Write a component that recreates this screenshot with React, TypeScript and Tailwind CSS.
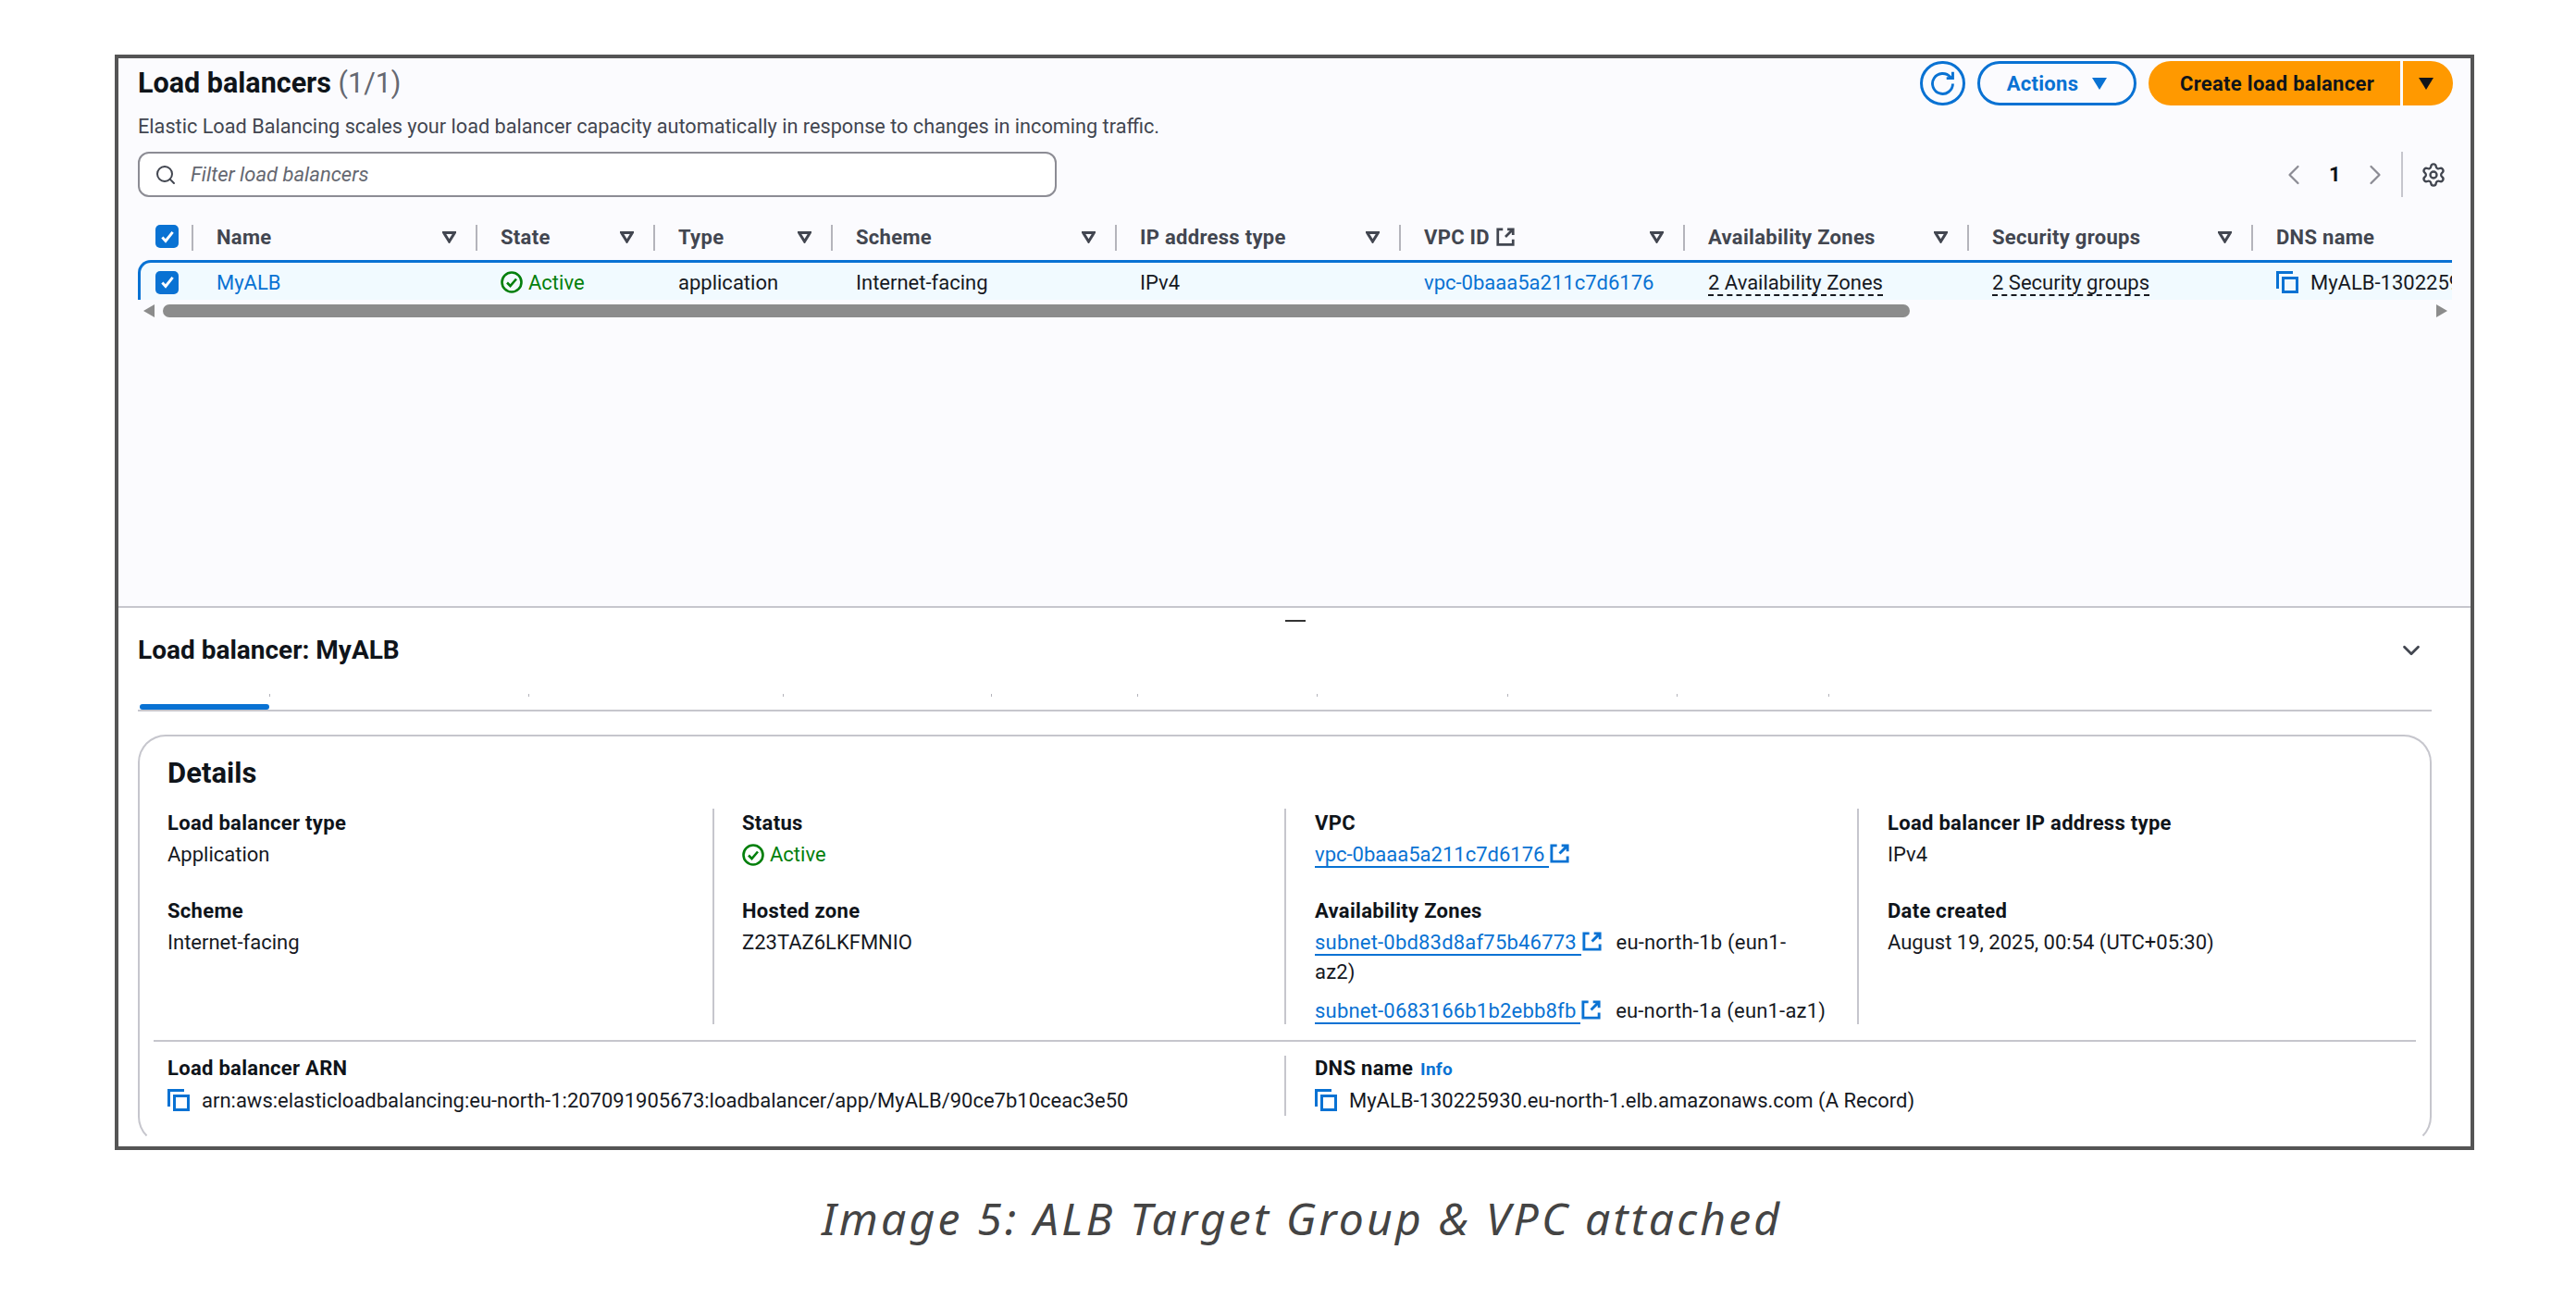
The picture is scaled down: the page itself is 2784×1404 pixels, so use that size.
import React from "react";
import { ChevronDown, ChevronLeft, ChevronRight, Search, Settings } from "lucide-react";

const tabTicks = ["w-[143px]", "w-[280px]", "w-[275px]", "w-[225px]", "w-[158px]", "w-[194px]", "w-[206px]", "w-[183px]", "w-[164px]"];

const columns = [
  { label: "Name", width: "w-[307px]", filter: true },
  { label: "State", width: "w-[192px]", filter: true },
  { label: "Type", width: "w-[192px]", filter: true },
  { label: "Scheme", width: "w-[307px]", filter: true },
  { label: "IP address type", width: "w-[307px]", filter: true },
  { label: "VPC ID", width: "w-[307px]", filter: true, external: true },
  { label: "Availability Zones", width: "w-[307px]", filter: true },
  { label: "Security groups", width: "w-[307px]", filter: true },
  { label: "DNS name", width: "w-[307px]", filter: false },
];

function CheckBox() {
  return (
    <span className="flex h-[25px] w-[25px] items-center justify-center rounded-[5px] bg-[#0972d3]">
      <svg viewBox="0 0 16 16" className="h-[18px] w-[18px]" fill="none" stroke="white" strokeWidth="2.6">
        <path d="M3 8.5l3.2 3.5L13 3.5" />
      </svg>
    </span>
  );
}

function SortIcon() {
  return (
    <svg viewBox="0 0 14 12" className="h-[13px] w-[15px]" fill="none" stroke="#424650" strokeWidth="2.8">
      <path d="M1.5 1.4h11L7 10.2z" />
    </svg>
  );
}

function ExternalIcon({ className }: { className: string }) {
  return (
    <svg viewBox="0 0 16 16" className={className} fill="none" stroke="currentColor" strokeWidth="2">
      <path d="M6 2H2v12h12v-4" />
      <path d="M9.5 2H14v4.5M14 2L8 8" />
    </svg>
  );
}

function CopyIcon() {
  return (
    <svg viewBox="0 0 24 24" className="h-[24px] w-[24px] shrink-0" fill="none" stroke="#0972d3" strokeWidth="3">
      <path d="M1.5 19V1.5H18" />
      <rect x="7.5" y="7.5" width="15" height="15" />
    </svg>
  );
}

function StatusActive() {
  return (
    <span className="flex items-center gap-[6px] text-[#037f0c]">
      <svg viewBox="0 0 24 24" className="h-[24px] w-[24px]" fill="none" stroke="#037f0c" strokeWidth="2.6">
        <circle cx="12" cy="12" r="10.5" />
        <path d="M7 12.5l3.5 3.5L17 8.5" />
      </svg>
      Active
    </span>
  );
}

function Field({ label, children }: { label: React.ReactNode; children: React.ReactNode }) {
  return (
    <div>
      <div className="h-[28px] font-bold leading-[28px] tracking-[0.3px] text-[#0f141a]">{label}</div>
      <div className="mt-[6px] leading-[28px]">{children}</div>
    </div>
  );
}

function SubnetLink({ id }: { id: string }) {
  return (
    <>
      <span className="border-b-2 border-[#0972d3] pr-[5px] text-[#0972d3]">{id}</span>
      <span className="inline-block w-[24px] align-[-3px] text-[#0972d3]">
        <ExternalIcon className="h-[23px] w-[23px]" />
      </span>
    </>
  );
}

export default function App() {
  return (
    <div className="h-[1404px] w-[2784px] overflow-hidden bg-white pl-[124px] pt-[59px] font-['Roboto',sans-serif] text-[22px] text-[#16191f]">
      <div className="flex h-[1184px] w-[2550px] flex-col overflow-hidden border-[4px] border-[#555555] bg-white">
        {/* Upper panel with the table */}
        <div className="h-[594px] shrink-0 border-b-2 border-[#c6c6cd] bg-[#fbfbfe] pl-[21px] pr-[19px] pt-[3px]">
          <div className="flex h-[48px] items-center justify-between">
            <h1 className="text-[30.5px] font-bold text-[#0f141a]">
              Load balancers <span className="font-normal text-[#656871]">(1/1)</span>
            </h1>
            <div className="flex items-center">
              <button className="flex h-[48px] w-[49px] items-center justify-center rounded-full border-[3px] border-[#0972d3] text-[#0972d3]">
                <svg viewBox="0 0 16 16" className="h-[27px] w-[27px]" fill="none" stroke="currentColor" strokeWidth="1.7">
                  <path d="M10.5 4.5h4V.5" />
                  <path d="M14.5 8a6.5 6.5 0 1 1-1.6-4.3l1.6.8" />
                </svg>
              </button>
              <button className="ml-[13px] flex h-[48px] w-[172px] items-center justify-center gap-[15px] rounded-full border-[3px] border-[#0972d3] font-bold tracking-[0.3px] text-[#0972d3]">
                Actions
                <svg viewBox="0 0 16 13" className="h-[13px] w-[16px]" fill="#0972d3">
                  <path d="M0 0h16L8 13z" />
                </svg>
              </button>
              <button className="ml-[13px] flex h-[48px] w-[272px] items-center justify-center rounded-l-full bg-[#ff9900] pl-[6px] font-bold tracking-[0.3px] text-[#0f141a]">
                Create load balancer
              </button>
              <button className="ml-[3px] flex h-[48px] w-[54px] items-center justify-center rounded-r-full bg-[#ff9900] pr-[4px]">
                <svg viewBox="0 0 16 13" className="h-[13px] w-[16px]" fill="#0f141a">
                  <path d="M0 0h16L8 13z" />
                </svg>
              </button>
            </div>
          </div>
          <p className="mt-[9px] h-[28px] text-[21.7px] leading-[28px] text-[#424650]">
            Elastic Load Balancing scales your load balancer capacity automatically in response to changes in incoming traffic.
          </p>
          <div className="mt-[13px] flex h-[49px] items-center justify-between">
            <div className="flex h-[49px] w-[993px] items-center rounded-[12px] border-2 border-[#8c8c94] bg-white pl-[16px]">
              <Search className="h-[24px] w-[24px] text-[#424650]" strokeWidth={2} />
              <span className="ml-[15px] italic text-[#656871]">Filter load balancers</span>
            </div>
            <div className="flex h-[49px] items-center">
              <ChevronLeft className="h-[36px] w-[36px] text-[#8c8c94]" strokeWidth={1.5} />
              <span className="ml-[20px] w-[14px] font-bold text-[#0f141a]">1</span>
              <ChevronRight className="ml-[18px] h-[36px] w-[36px] text-[#8c8c94]" strokeWidth={1.5} />
              <span className="ml-[10px] h-[49px] w-[2px] bg-[#c6c6cd]" />
              <Settings className="ml-[19px] mr-[7px] h-[28px] w-[28px] text-[#424650]" strokeWidth={2} />
            </div>
          </div>

          {/* Table */}
          <div className="mt-[30px] w-[2501px] overflow-hidden">
            <div className="flex h-[38px] items-start">
              <div className="flex h-[28px] w-[58px] shrink-0 items-center pb-[3px] pl-[19px]">
                <CheckBox />
              </div>
              {columns.map((col) => (
                <div key={col.label} className={`${col.width} flex h-[28px] shrink-0 items-center justify-between border-l-2 border-[#b4b4bb] pb-[2px] pl-[25px] pr-[21px] font-bold tracking-[0.3px] text-[#424650]`}>
                  <span className="flex items-center gap-[6px]">
                    {col.label}
                    {col.external && <ExternalIcon className="h-[22px] w-[22px]" />}
                  </span>
                  {col.filter && <SortIcon />}
                </div>
              ))}
            </div>
            <div className="flex h-[43px] items-center rounded-tl-[14px] border-l-[3px] border-t-[3px] border-[#0972d3] bg-[#f1faff] pr-[2px] pt-[2px]">
              <div className="flex w-[55px] shrink-0 items-center pl-[16px]">
                <CheckBox />
              </div>
              <div className="w-[307px] shrink-0 pl-[27px] text-[#0972d3]">MyALB</div>
              <div className="w-[192px] shrink-0 pl-[27px]"><StatusActive /></div>
              <div className="w-[192px] shrink-0 pl-[27px]">application</div>
              <div className="w-[307px] shrink-0 pl-[27px]">Internet-facing</div>
              <div className="w-[307px] shrink-0 pl-[27px]">IPv4</div>
              <div className="w-[307px] shrink-0 pl-[27px] text-[#0972d3]">vpc-0baaa5a211c7d6176</div>
              <div className="w-[307px] shrink-0 pl-[27px]"><span className="border-b-2 border-dashed border-[#16191f]">2 Availability Zones</span></div>
              <div className="w-[307px] shrink-0 pl-[27px]"><span className="border-b-2 border-dashed border-[#16191f]">2 Security groups</span></div>
              <div className="flex shrink-0 items-center gap-[13px] whitespace-nowrap pl-[27px]">
                <CopyIcon />
                MyALB-130225930.eu-north-1.elb.amazonaws.com
              </div>
            </div>
            {/* Scrollbar */}
            <div className="mt-[5px] flex h-[14px] items-center pl-[6px] pr-[5px]">
              <svg viewBox="0 0 12 14" className="h-[14px] w-[12px]" fill="#8c8c8c"><path d="M12 0v14L0 7z" /></svg>
              <div className="ml-[9px] h-[14px] w-[1888px] rounded-full bg-[#8c8c8c]" />
              <svg viewBox="0 0 12 14" className="ml-auto h-[14px] w-[12px]" fill="#8c8c8c"><path d="M0 0v14l12-7z" /></svg>
            </div>
          </div>
        </div>

        {/* Lower panel with the details */}
        <div className="flex-1 pl-[21px] pr-[42px]">
          <div className="flex justify-center pl-[22px] pt-[13px]">
            <span className="h-[2px] w-[22px] bg-[#333333]" />
          </div>
          <div className="mt-[13px] flex h-[36px] items-center justify-between pr-[7px]">
            <h2 className="text-[28px] font-bold text-[#0f141a]">Load balancer: MyALB</h2>
            <ChevronDown className="h-[30px] w-[30px] text-[#424650]" strokeWidth={2.2} />
          </div>
          <div className="border-b-2 border-[#c6c6cd] pt-[29px]">
            <div className="flex h-[3px]">
              {tabTicks.map((w) => (
                <span key={w} className={`${w} h-[3px] border-r border-[#b4b4bb]`} />
              ))}
            </div>
            <div className="ml-[2px] mt-[8px] h-[6px] w-[140px] rounded-[3px] bg-[#0972d3]" />
          </div>

          <div className="mt-[25px] h-[443px] rounded-[30px] border-2 border-[#c6c6cd] border-b-transparent">
            <h3 className="mt-[23px] pl-[30px] text-[31px] font-bold leading-[34px] text-[#0f141a]">Details</h3>
            <div className="mt-[21px] flex h-[233px] pl-[30px]">
              <div className="flex w-[589px] flex-col gap-[33px] pt-[2px]">
                <Field label="Load balancer type">Application</Field>
                <Field label="Scheme">Internet-facing</Field>
              </div>
              <div className="flex w-[618px] flex-col gap-[33px] border-l-2 border-[#c6c6cd] pl-[30px] pt-[2px]">
                <Field label="Status"><StatusActive /></Field>
                <Field label="Hosted zone">Z23TAZ6LKFMNIO</Field>
              </div>
              <div className="flex w-[619px] flex-col gap-[33px] border-l-2 border-[#c6c6cd] pl-[31px] pt-[2px]">
                <Field label="VPC"><SubnetLink id="vpc-0baaa5a211c7d6176" /></Field>
                <div>
                  <div className="h-[28px] font-bold leading-[28px] tracking-[0.3px] text-[#0f141a]">Availability Zones</div>
                  <p className="mt-[4px] leading-[32px] tracking-[0.2px]">
                    <SubnetLink id="subnet-0bd83d8af75b46773" /> <span className="ml-[8px]">eu-north-1b (eun1-</span>
                    <br />
                    az2)
                  </p>
                  <p className="mt-[10px] leading-[32px] tracking-[0.2px]">
                    <SubnetLink id="subnet-0683166b1b2ebb8fb" /> <span className="ml-[8px]">eu-north-1a (eun1-az1)</span>
                  </p>
                </div>
              </div>
              <div className="flex flex-1 flex-col gap-[33px] border-l-2 border-[#c6c6cd] pl-[31px] pt-[2px]">
                <Field label="Load balancer IP address type">IPv4</Field>
                <Field label="Date created">August 19, 2025, 00:54 (UTC+05:30)</Field>
              </div>
            </div>
            <div className="mx-[15px] mt-[17px] h-[2px] bg-[#c6c6cd]" />
            <div className="mt-[15px] flex h-[65px] pl-[30px]">
              <div className="w-[1207px]">
                <div className="h-[28px] font-bold leading-[28px] tracking-[0.3px] text-[#0f141a]">Load balancer ARN</div>
                <div className="mt-[6px] flex h-[28px] items-center gap-[13px]">
                  <CopyIcon />
                  arn:aws:elasticloadbalancing:eu-north-1:207091905673:loadbalancer/app/MyALB/90ce7b10ceac3e50
                </div>
              </div>
              <div className="flex-1 border-l-2 border-[#c6c6cd] pl-[31px]">
                <div className="h-[28px] font-bold leading-[28px] tracking-[0.3px] text-[#0f141a]">
                  DNS name <span className="ml-[2px] text-[19px] text-[#0972d3]">Info</span>
                </div>
                <div className="mt-[6px] flex h-[28px] items-center gap-[13px]">
                  <CopyIcon />
                  MyALB-130225930.eu-north-1.elb.amazonaws.com (A Record)
                </div>
              </div>
            </div>
          </div>
        </div>
      </div>
      <p className="ml-[764px] mt-[44px] whitespace-nowrap font-['Noto_Sans',sans-serif] text-[48px] italic leading-[60px] tracking-[3.2px] text-[#444444]">
        Image 5: ALB Target Group &amp; VPC attached
      </p>
    </div>
  );
}
